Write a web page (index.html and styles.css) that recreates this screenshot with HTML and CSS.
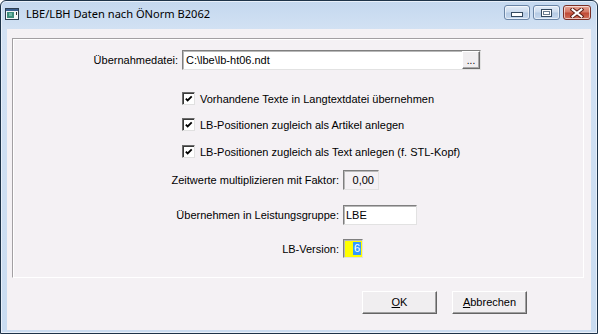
FILE: index.html
```html
<!DOCTYPE html>
<html>
<head>
<meta charset="utf-8">
<link rel="stylesheet" href="styles.css">
</head>
<body>
<div class="window">
  <div class="titlebar">
    <svg class="appicon" width="14" height="12" viewBox="0 0 14 12">
      <rect x="0.5" y="0.5" width="13" height="11" fill="#f4f6f8" stroke="#2c3e50"/>
      <rect x="1" y="1" width="12" height="2" fill="#3a5f8f"/>
      <rect x="2" y="4" width="7" height="6" fill="#3e8c7c"/>
      <rect x="4" y="5" width="3" height="3" fill="#6fb7a8"/>
      <rect x="11" y="4" width="1" height="3" fill="#333"/>
    </svg>
    <span class="title">LBE/LBH Daten nach ÖNorm B2062</span>
    <div class="caption">
      <div class="cbtn cbtn-min"><span class="glyph-min"></span></div>
      <div class="cbtn cbtn-max"><span class="glyph-max"></span></div>
      <div class="cbtn cbtn-close">
        <svg width="14" height="10" viewBox="0 0 14 10">
          <path d="M2.5 1.5 L11.5 8.5 M11.5 1.5 L2.5 8.5" stroke="#5a1c14" stroke-width="4" stroke-linecap="square"/>
          <path d="M2.5 1.5 L11.5 8.5 M11.5 1.5 L2.5 8.5" stroke="#ffffff" stroke-width="2" stroke-linecap="square"/>
        </svg>
      </div>
    </div>
  </div>
  <div class="client">
    <div class="group">
      <div class="row row-file">
        <span class="lbl lbl-short">Übernahmedatei:</span>
        <div class="field field-file">
          <span class="val">C:\lbe\lb-ht06.ndt</span>
          <span class="browse">...</span>
        </div>
      </div>
      <div class="check-row cr1">
        <span class="cb"><svg width="11" height="11" viewBox="0 0 11 11"><path d="M2 4.5 L4 6.5 L8.5 2" fill="none" stroke="#000" stroke-width="2"/></svg></span>
        <span class="ctext">Vorhandene Texte in Langtextdatei übernehmen</span>
      </div>
      <div class="check-row cr2">
        <span class="cb"><svg width="11" height="11" viewBox="0 0 11 11"><path d="M2 4.5 L4 6.5 L8.5 2" fill="none" stroke="#000" stroke-width="2"/></svg></span>
        <span class="ctext">LB-Positionen zugleich als Artikel anlegen</span>
      </div>
      <div class="check-row cr3">
        <span class="cb"><svg width="11" height="11" viewBox="0 0 11 11"><path d="M2 4.5 L4 6.5 L8.5 2" fill="none" stroke="#000" stroke-width="2"/></svg></span>
        <span class="ctext">LB-Positionen zugleich als Text anlegen (f. STL-Kopf)</span>
      </div>
      <div class="row row-faktor">
        <span class="lbl lbl-long">Zeitwerte multiplizieren mit Faktor:</span>
        <div class="field field-faktor">0,00</div>
      </div>
      <div class="row row-lg">
        <span class="lbl lbl-long">Übernehmen in Leistungsgruppe:</span>
        <div class="field field-lg">LBE</div>
      </div>
      <div class="row row-ver">
        <span class="lbl lbl-long">LB-Version:</span>
        <div class="field field-ver"><span class="sel">6</span></div>
      </div>
    </div>
    <div class="buttons">
      <div class="btn"><u>O</u>K</div>
      <div class="btn"><u>A</u>bbrechen</div>
    </div>
  </div>
</div>
</body>
</html>
```
FILE: styles.css
```css
* { box-sizing: border-box; }
html, body { margin: 0; padding: 0; background: #ffffff; }
body { width: 598px; height: 334px; overflow: hidden; }

.window {
  width: 598px;
  height: 334px;
  border: 1px solid #1d3349;
  border-radius: 6px 6px 0 0;
  background: linear-gradient(to bottom, #c4d8ef 0px, #d2e1f3 28px, #c9dcf1 100%);
  padding: 0 6px 3px 6px;
  display: flex;
  flex-direction: column;
  box-shadow: inset 0 0 0 1px #e8f0fa;
}

.titlebar {
  height: 28px;
  display: flex;
  align-items: center;
  position: relative;
}
.appicon { margin: 0 0 2px -2px; flex: none; }
.title {
  margin-left: 7px;
  font-family: "Noto Sans", "DejaVu Sans", sans-serif;
  font-size: 11.1px;
  color: #000;
  margin-top: -3px;
  letter-spacing: 0;
}
.caption {
  margin-left: auto;
  margin-right: 0;
  margin-top: -5px;
  display: flex;
  gap: 3px;
}
.cbtn {
  width: 27px;
  height: 15px;
  border: 1px solid #6a85a6;
  border-radius: 3px;
  display: flex;
  align-items: center;
  justify-content: center;
  background: linear-gradient(to bottom, #e3ecf7 0%, #cddcee 45%, #b6cbe4 55%, #c6d8ee 100%);
  box-shadow: inset 0 0 0 1px rgba(255,255,255,0.6);
}
.cbtn-min { width: 26px; }
.cbtn-close {
  width: 28px;
  border-color: #7a2f26;
  background: linear-gradient(to bottom, #e8a595 0%, #d47866 45%, #c04a36 55%, #d0705c 100%);
}
.glyph-min {
  width: 12px;
  height: 5px;
  margin-top: 4px;
  border: 1px solid #34495e;
  background: #fff;
}
.glyph-max {
  width: 11px;
  height: 8px;
  border: 1px solid #34495e;
  background: #fff;
  box-shadow: inset 0 0 0 1px #fff, inset 0 0 0 2px #6a7d91;
}

.client {
  flex: 1;
  background: #f4f1f4;
  padding: 9px 0 0 5px;
  font-family: "Liberation Sans", Arial, sans-serif;
  font-size: 11px;
  color: #000;
}

.group {
  width: 572px;
  height: 240px;
  border-top: 1px solid #a29fa2;
  border-left: 1px solid #a29fa2;
  border-right: 1px solid #ffffff;
  border-bottom: 1px solid #ffffff;
  box-shadow: inset 1px 1px 0 #ffffff;
  display: flex;
  flex-direction: column;
}

.row { display: flex; align-items: center; }
.lbl { text-align: right; flex: none; padding-right: 4px; }
.lbl-short { width: 169px; }
.lbl-long { width: 330px; }

.field {
  height: 20px;
  background: #ffffff;
  border: 1px solid;
  border-color: #7f7f7f #e2e2e2 #e2e2e2 #7f7f7f;
  box-shadow: inset 1px 1px 0 #b8b8b8;
  display: flex;
  align-items: center;
  padding: 0 2px;
}

.row-file { margin-top: 11px; }
.field-file { width: 299px; padding-right: 0; }
.field-file .val { flex: 1; padding-left: 1px; }
.browse {
  width: 18px;
  height: 18px;
  margin-top: -1px;
  border: 1px solid;
  border-color: #ffffff #6d6d6d #6d6d6d #ffffff;
  box-shadow: inset -1px -1px 0 #a8a8a8;
  background: #f0eef0;
  display: flex;
  justify-content: center;
  align-items: flex-end;
  padding-bottom: 3px;
  line-height: 8px;
  font-size: 10px;
  letter-spacing: 0;
}

.check-row { display: flex; align-items: center; padding-left: 169px; height: 13px; }
.cr1 { margin-top: 22px; }
.cr2 { margin-top: 13px; }
.cr3 { margin-top: 14px; }
.cb {
  width: 13px;
  height: 13px;
  border: 1px solid;
  border-color: #6b6b6b #e0e0e0 #e0e0e0 #6b6b6b;
  box-shadow: inset 1px 1px 0 #3a3a3a;
  background: #ffffff;
  display: flex;
  align-items: center;
  justify-content: center;
  flex: none;
}
.cb svg { margin: 1px 0 0 1px; }
.ctext { margin-left: 5px; }

.row-faktor { margin-top: 12px; }
.field-faktor {
  width: 36px;
  background: #f4f1f4;
  justify-content: flex-end;
  padding-right: 4px;
}
.row-lg { margin-top: 15px; }
.field-lg { width: 74px; }
.row-ver { margin-top: 14px; }
.field-ver {
  width: 20px;
  height: 19px;
  background: #ffff00;
  justify-content: flex-end;
  padding-right: 1px;
}
.sel {
  background: #3399ff;
  color: #ffffff;
  height: 13px;
  line-height: 13px;
  padding: 0 1px;
}

.buttons {
  display: flex;
  justify-content: flex-end;
  gap: 15px;
  margin-top: 13px;
  padding-right: 64px;
}
.btn {
  width: 75px;
  height: 23px;
  border: 1px solid;
  border-color: #ffffff #646464 #646464 #ffffff;
  box-shadow: inset -1px -1px 0 #a0a0a0;
  background: #f0eef0;
  display: flex;
  align-items: center;
  justify-content: center;
  padding-bottom: 1px;
}
```
